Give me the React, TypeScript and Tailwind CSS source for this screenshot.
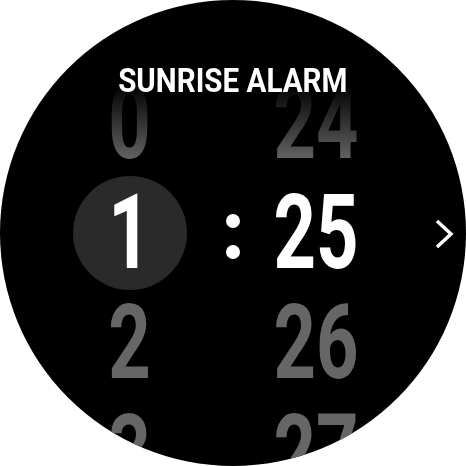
const digit = "font-['Roboto',sans-serif] font-bold text-[103px] leading-[110px] h-[110px] flex items-center justify-center scale-x-[0.72]";

const fade = "bg-[linear-gradient(to_bottom,#000_15%,#666_85%)] bg-clip-text text-transparent";

function Column({ values, width }: { values: string[]; width: string }) {
  return (
    <div className={`flex flex-col items-center ${width}`}>
      <div className={`${digit} ${fade}`}>{values[0]}</div>
      <div className="relative h-[110px] flex items-center justify-center">
        {values[1] === "1" && (
          <div className="absolute w-[114px] h-[114px] rounded-full bg-[#2a2a2a]" />
        )}
        <span className={`${digit} relative text-white`}>{values[1]}</span>
      </div>
      <div className={`${digit} text-[#666]`}>{values[2]}</div>
      <div className={`${digit} text-[#666]`}>{values[3]}</div>
    </div>
  );
}

export default function App() {
  return (
    <div className="w-[466px] h-[466px] bg-white">
      <div className="relative w-[466px] h-[466px] rounded-full bg-black overflow-hidden">
        <div className="flex items-start pt-[68px]">
          <div className="w-[73px]" />
          <Column values={["0", "1", "2", "3"]} width="w-[114px]" />
          <div className="w-[39px]" />
          <div className="flex flex-col items-center justify-center gap-[17px] w-[14px] mt-[146px]">
            <div className="w-[14px] h-[14px] rounded-full bg-white" />
            <div className="w-[14px] h-[14px] rounded-full bg-white" />
          </div>
          <div className="w-[28px]" />
          <Column values={["24", "25", "26", "27"]} width="w-[96px]" />
          <div className="w-[70px]" />
          <svg className="mt-[151px]" width="22" height="30" viewBox="0 0 22 30">
            <path d="M3 2 L17 15 L3 28" fill="none" stroke="white" strokeWidth="3.5" />
          </svg>
        </div>
        <div className="absolute top-[58px] left-0 right-0 flex justify-center">
          <span className="font-['Roboto',sans-serif] font-bold text-[34px] leading-[44px] text-white scale-x-[0.87]">
            SUNRISE ALARM
          </span>
        </div>
      </div>
    </div>
  );
}
